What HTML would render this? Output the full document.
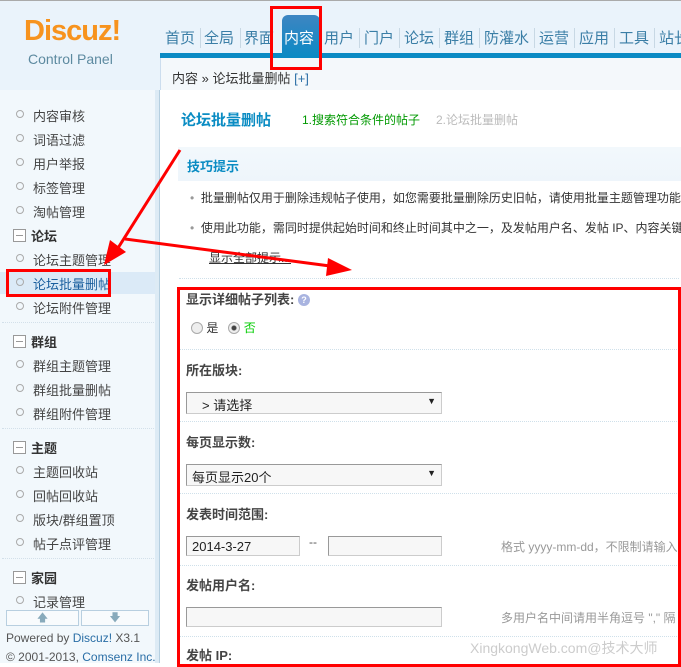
<!DOCTYPE html>
<html><head><meta charset="utf-8">
<style>
*{margin:0;padding:0;box-sizing:border-box}
body{width:681px;height:663px;overflow:hidden;position:relative;background:#fff;font-family:"Liberation Sans","Noto Sans CJK SC",sans-serif;font-size:12px;color:#333}
.a{position:absolute;white-space:nowrap}
#hdr{position:absolute;left:0;top:0;width:681px;height:90px;background:#eaf3fb;border-top:1px solid #aaa}
#side{position:absolute;left:0;top:90px;width:155px;height:573px;background:#f2f8fc}
#sstrip{position:absolute;left:155px;top:90px;width:5px;height:573px;background:#ddebf5;border-right:1px solid #b5cfe0}
.nav{position:absolute;top:27px;font-size:15px;color:#3a7ea6;white-space:nowrap}
.sep{position:absolute;top:28px;width:1px;height:20px;background:#c8d8e4}
.si{position:absolute;left:16px;font-size:13px;color:#444;white-space:nowrap}
.si:before{content:"";display:inline-block;width:6px;height:6px;border:1px solid #aaa;border-radius:50%;margin-right:9px;vertical-align:3px}
.sh{position:absolute;left:13px;font-size:13px;font-weight:bold;color:#333}
.sh:before{content:"";display:inline-block;width:11px;height:11px;border:1px solid #999;margin-right:5px;vertical-align:-1px;background:linear-gradient(#999,#999) center/7px 1px no-repeat #fff}
.dl{position:absolute;left:2px;width:152px;border-top:1px dotted #d3e0ea}
.lbl{position:absolute;left:186px;font-size:13px;font-weight:bold;color:#444;white-space:nowrap}
.fs{position:absolute;left:179px;width:500px;border-top:1px dotted #cfe0ea}
.inp{position:absolute;height:20px;border:1px solid #999;border-right-color:#ccc;border-bottom-color:#ccc;background:#f7f7f7;font-size:13px;padding:2px 5px;color:#222}
.hint{position:absolute;left:501px;font-size:12px;color:#999;white-space:nowrap}
.red{position:absolute;border:3px solid #f00}
</style></head><body>
<div id="hdr"></div>
<div class="a" style="left:24px;top:15px;font-size:29px;font-weight:bold;color:#f7931e;letter-spacing:-1px">Discuz!</div>
<div class="a" style="left:28px;top:51px;font-size:14px;color:#5d8aa0">Control Panel</div>
<div style="position:absolute;left:160px;top:53px;width:521px;height:5px;background:#0a8ac4"></div>
<div style="position:absolute;left:160px;top:58px;width:521px;height:32px;background:#f4f8fb;border-left:1px solid #cde"></div>
<div class="a" style="left:172px;top:68px;font-size:13px;color:#333">内容 » 论坛批量删帖 <span style="color:#2a6ea6">[+]</span></div>
<div style="position:absolute;left:282px;top:15px;width:38px;height:43px;border-radius:6px 6px 0 0;background:linear-gradient(#3e85c2,#0a8ac4)"></div>
<div class="a" style="left:284px;top:27px;font-size:15px;color:#fff">内容</div>
<div class="nav" style="left:165px">首页</div><div class="sep" style="left:200px"></div>
<div class="nav" style="left:204px">全局</div><div class="sep" style="left:240px"></div>
<div class="nav" style="left:244px">界面</div>
<div class="nav" style="left:324px">用户</div><div class="sep" style="left:359px"></div>
<div class="nav" style="left:364px">门户</div><div class="sep" style="left:399px"></div>
<div class="nav" style="left:404px">论坛</div><div class="sep" style="left:439px"></div>
<div class="nav" style="left:444px">群组</div><div class="sep" style="left:479px"></div>
<div class="nav" style="left:484px">防灌水</div><div class="sep" style="left:534px"></div>
<div class="nav" style="left:539px">运营</div><div class="sep" style="left:574px"></div>
<div class="nav" style="left:579px">应用</div><div class="sep" style="left:614px"></div>
<div class="nav" style="left:619px">工具</div><div class="sep" style="left:654px"></div>
<div class="nav" style="left:659px">站长</div>

<div id="side"></div><div id="sstrip"></div>
<div class="si" style="top:106px">内容审核</div>
<div class="si" style="top:130px">词语过滤</div>
<div class="si" style="top:154px">用户举报</div>
<div class="si" style="top:178px">标签管理</div>
<div class="si" style="top:202px">淘帖管理</div>
<div class="sh" style="top:226px">论坛</div>
<div class="si" style="top:250px">论坛主题管理</div>
<div style="position:absolute;left:0;top:272px;width:155px;height:22px;background:#dbeaf7"></div>
<div class="si" style="top:274px;color:#1a5f9e">论坛批量删帖</div>
<div class="si" style="top:298px">论坛附件管理</div>
<div class="dl" style="top:322px"></div>
<div class="sh" style="top:332px">群组</div>
<div class="si" style="top:356px">群组主题管理</div>
<div class="si" style="top:380px">群组批量删帖</div>
<div class="si" style="top:404px">群组附件管理</div>
<div class="dl" style="top:428px"></div>
<div class="sh" style="top:438px">主题</div>
<div class="si" style="top:462px">主题回收站</div>
<div class="si" style="top:486px">回帖回收站</div>
<div class="si" style="top:510px">版块/群组置顶</div>
<div class="si" style="top:534px">帖子点评管理</div>
<div class="dl" style="top:558px"></div>
<div class="sh" style="top:568px">家园</div>
<div class="si" style="top:592px">记录管理</div>
<div style="position:absolute;left:6px;top:610px;width:73px;height:16px;border:1px solid #b8cfe0;background:#f8fbfd;color:#8ab;font-size:11px;text-align:center;line-height:14px">🡅</div>
<div style="position:absolute;left:81px;top:610px;width:68px;height:16px;border:1px solid #b8cfe0;background:#f8fbfd;color:#8ab;font-size:11px;text-align:center;line-height:14px">🡇</div>
<div class="a" style="left:6px;top:631px;font-size:12px;color:#555">Powered by <span style="color:#2a6ea6">Discuz!</span> X3.1</div>
<div class="a" style="left:6px;top:650px;font-size:12px;color:#555">© 2001-2013, <span style="color:#2a6ea6">Comsenz Inc.</span></div>

<div class="a" style="left:181px;top:109px;font-size:15px;font-weight:bold;color:#0a8cc3">论坛批量删帖</div>
<div class="a" style="left:302px;top:111px;font-size:12px;color:#090">1.搜索符合条件的帖子</div>
<div class="a" style="left:436px;top:111px;font-size:12px;color:#bbb">2.论坛批量删帖</div>
<div style="position:absolute;left:178px;top:147px;width:503px;height:34px;background:linear-gradient(#f2f8fc,#eef5fb)"></div>
<div class="a" style="left:187px;top:156px;font-size:13px;font-weight:bold;color:#0a8cc3">技巧提示</div>
<div class="a" style="left:190px;top:189px;font-size:12px;color:#333"><span style="color:#999">•</span>&nbsp; 批量删帖仅用于删除违规帖子使用，如您需要批量删除历史旧帖，请使用批量主题管理功能</div>
<div class="a" style="left:190px;top:219px;font-size:12px;color:#333"><span style="color:#999">•</span>&nbsp; 使用此功能，需同时提供起始时间和终止时间其中之一，及发帖用户名、发帖 IP、内容关键</div>
<div class="a" style="left:209px;top:249px;font-size:12px;color:#333;text-decoration:underline">显示全部提示...</div>
<div class="fs" style="top:278px"></div>

<div class="lbl" style="top:289px">显示详细帖子列表: <span style="display:inline-block;width:12px;height:12px;border-radius:50%;background:#a9b4e0;color:#fff;font-size:9px;text-align:center;line-height:12px;vertical-align:1px">?</span></div>
<div class="a" style="left:191px;top:319px;font-size:12px;color:#333"><span style="display:inline-block;width:12px;height:12px;border:1px solid #aaa;border-radius:50%;background:#eee;vertical-align:-2px"></span> 是 &nbsp; <span style="display:inline-block;width:12px;height:12px;border:1px solid #aaa;border-radius:50%;background:radial-gradient(#444 2px,#eee 3px);vertical-align:-2px"></span> <span style="color:#0c0">否</span></div>
<div class="fs" style="top:349px"></div>
<div class="lbl" style="top:360px">所在版块:</div>
<div class="inp" style="left:186px;top:392px;width:256px;height:22px;padding-left:15px">&gt; 请选择<span style="position:absolute;right:5px;top:3px;font-size:9px">▼</span></div>
<div class="fs" style="top:421px"></div>
<div class="lbl" style="top:432px">每页显示数:</div>
<div class="inp" style="left:186px;top:464px;width:256px;height:22px">每页显示20个<span style="position:absolute;right:5px;top:3px;font-size:9px">▼</span></div>
<div class="fs" style="top:493px"></div>
<div class="lbl" style="top:504px">发表时间范围:</div>
<div class="inp" style="left:186px;top:536px;width:114px">2014-3-27</div>
<div class="a" style="left:309px;top:535px;color:#555">--</div>
<div class="inp" style="left:328px;top:536px;width:114px"></div>
<div class="hint" style="top:538px">格式 yyyy-mm-dd，不限制请输入</div>
<div class="fs" style="top:565px"></div>
<div class="lbl" style="top:575px">发帖用户名:</div>
<div class="inp" style="left:186px;top:607px;width:256px"></div>
<div class="hint" style="top:609px">多用户名中间请用半角逗号 "," 隔</div>
<div class="fs" style="top:636px"></div>
<div class="lbl" style="top:645px">发帖 IP:</div>
<div class="a" style="left:470px;top:638px;font-size:14px;color:#ccc">XingkongWeb.com@技术大师</div>

<div class="red" style="left:270px;top:6px;width:52px;height:64px"></div>
<div class="red" style="left:6px;top:269px;width:105px;height:28px"></div>
<div class="red" style="left:177px;top:287px;width:504px;height:380px"></div>
<svg style="position:absolute;left:0;top:0" width="681" height="663">
<line x1="180" y1="150" x2="118" y2="248" stroke="#f00" stroke-width="3"/>
<polygon points="104,265 110,240 126,252" fill="#f00"/>
<line x1="125" y1="239" x2="330" y2="266" stroke="#f00" stroke-width="3"/>
<polygon points="352,270 328,258 326,276" fill="#f00"/>
</svg>
</body></html>
